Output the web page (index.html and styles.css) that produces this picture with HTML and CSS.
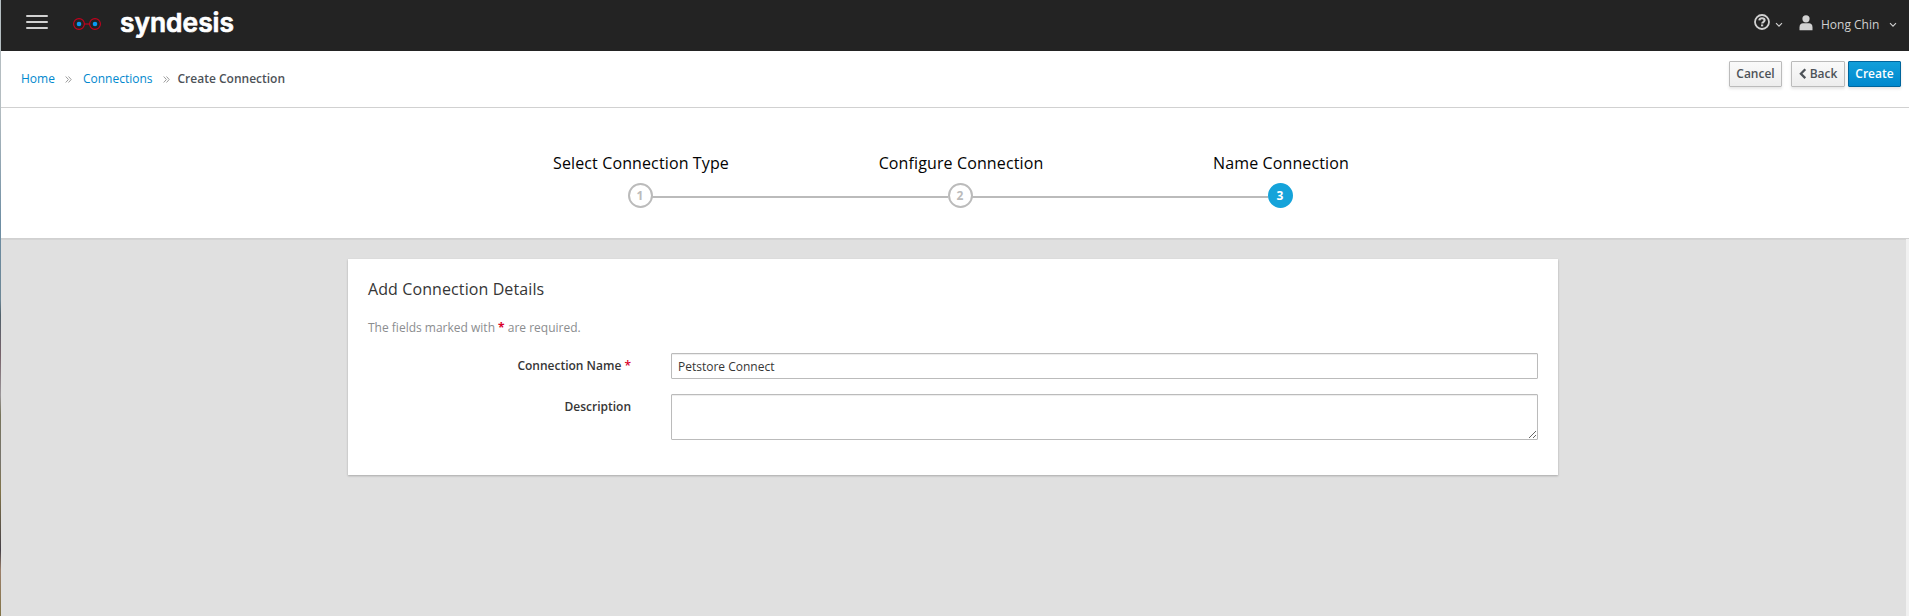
FILE: index.html
```html
<!DOCTYPE html>
<html lang="en">
<head>
<meta charset="utf-8">
<title>Syndesis</title>
<link rel="stylesheet" href="styles.css">
</head>
<body>
<div class="edge"></div>
<div class="app">
  <header class="navbar">
    <button class="menu" aria-label="Menu"><i></i><i></i><i></i></button>
    <svg class="glasses" width="28" height="12" viewBox="0 0 28 12">
      <g fill="none" stroke="#c8001e" stroke-width="1.1"><circle cx="6" cy="6" r="5.4"/><circle cx="22" cy="6" r="5.4"/><path d="M11.5 6h5"/></g>
      <g fill="#0a9af5"><circle cx="6" cy="6" r="2.3"/><circle cx="22" cy="6" r="2.3"/></g>
    </svg>
    <svg class="brand" width="116" height="32" viewBox="0 0 116 32">
      <text x="0" y="23.500" textLength="114" lengthAdjust="spacingAndGlyphs">syndesis</text>
    </svg>
    <div class="tools">
      <svg class="help" width="16" height="16" viewBox="0 0 16 16" fill="none" stroke="#d1d1d1">
        <circle cx="8" cy="8" r="7" stroke-width="1.8"/>
        <path d="M5.300 6.300C5.500 4.900 6.500 4.300 8 4.300c1.600 0 2.600.8 2.600 2 0 1.700-2.500 1.700-2.500 3.300" stroke-width="2.100"/>
        <path d="M7 11.400h2.200" stroke-width="1.900"/>
      </svg>
      <svg class="caret" width="8" height="6" viewBox="0 0 8 6"><path d="M1 1.200l3 3 3-3"/></svg>
      <svg class="user" width="14" height="16" viewBox="0 0 14 16" fill="#d1d1d1"><circle cx="7" cy="3.800" r="3.600"/><path d="M.5 15.300V12.500C.5 9.700 2 8.300 4 8.300h6c2 0 3.500 1.400 3.500 4.200v2.800z"/></svg>
      <span class="name">Hong Chin</span>
      <svg class="caret last" width="8" height="6" viewBox="0 0 8 6"><path d="M1 1.200l3 3 3-3"/></svg>
    </div>
  </header>
  <div class="toolbar">
    <nav class="crumbs">
      <a>Home</a>
      <svg class="sep" width="7" height="7" viewBox="0 0 7 7"><path d="M.7.500l2.700 3-2.700 3M3.500.500l2.700 3-2.700 3"/></svg>
      <a class="second">Connections</a>
      <svg class="sep" width="7" height="7" viewBox="0 0 7 7"><path d="M.7.500l2.700 3-2.700 3M3.500.500l2.700 3-2.700 3"/></svg>
      <strong>Create Connection</strong>
    </nav>
    <div class="actions">
      <button class="btn cancel">Cancel</button>
      <button class="btn back"><svg width="8" height="12" viewBox="0 0 8 12"><path d="M6.300 1.300L1.900 5.700l4.400 4.400"/></svg>Back</button>
      <button class="btn primary">Create</button>
    </div>
  </div>
  <ol class="steps">
    <li><span class="title">Select Connection Type</span><span class="num">1</span></li>
    <li><span class="title">Configure Connection</span><span class="num">2</span></li>
    <li class="active"><span class="title">Name Connection</span><span class="num">3</span></li>
  </ol>
  <main class="content">
    <form class="card">
      <h2>Add Connection Details</h2>
      <p>The fields marked with <b class="req">*</b> are required.</p>
      <div class="row"><label for="name">Connection Name <span class="req">*</span></label><input id="name" type="text" value="Petstore Connect"></div>
      <div class="row"><label for="desc">Description</label><textarea id="desc"></textarea></div>
    </form>
  </main>
</div>
</body>
</html>
```
FILE: styles.css
```css
* { box-sizing: border-box; }
body {
  margin: 0;
  height: 616px;
  overflow: hidden;
  display: flex;
  font: 12px/20px "Open Sans", sans-serif;
  color: #363636;
  background: #fff;
}
.edge {
  width: 1px;
  background: linear-gradient(#b4bdc1 0 107px, #6d8da3 225px, #6d8796 300px, #50616b 315px, #78626a 355px, #9a9699 395px, #77745a 415px, #77746d 460px, #817448 490px, #454047 550px, #9c806b 570px, #827447);
}
.app { flex: 1; display: flex; flex-direction: column; }
.navbar {
  height: 51px;
  background: #232323;
  display: flex;
  align-items: flex-start;
}
.menu {
  margin: 15px 0 0 25px;
  padding: 0;
  width: 22px;
  border: 0;
  background: none;
  display: flex;
  flex-direction: column;
  gap: 4px;
}
.menu i { height: 2px; background: #d1d1d1; border-radius: 1px; }
.glasses { margin: 18px 0 0 25px; }
.brand { margin: 8px 0 0 19px; overflow: visible; }
.brand text {
  font: 600 26px Inter, sans-serif;
  fill: #fff;
  stroke: #fff;
  stroke-width: .7;
  stroke-linejoin: round;
}
.tools { margin-left: auto; display: flex; align-items: flex-start; color: #d1d1d1; }
.help { margin-top: 14px; }
.caret { margin: 22px 0 0 5px; fill: none; stroke: #d1d1d1; stroke-width: 1.1; }
.user { margin: 15px 0 0 16px; }
.name { margin: 15px 0 0 8px; width: 59px; white-space: nowrap; }
.caret.last { margin: 22px 12px 0 9px; }
.toolbar {
  height: 57px;
  border-bottom: 1px solid #d1d1d1;
  display: flex;
  justify-content: space-between;
}
.crumbs { display: flex; align-items: flex-start; padding: 18px 0 0 20px; white-space: nowrap; }
.crumbs a { color: #0088ce; }
.crumbs strong { margin-left: 8px; font-weight: 600; color: #4d5258; }
.sep { margin: 7px 0 0 10px; fill: none; stroke: #9c9c9c; }
.second { margin-left: 11px; }
.actions { display: flex; padding: 10px 8px 0 0; align-items: flex-start; }
.btn {
  width: 54px;
  height: 26px;
  padding: 0;
  border: 1px solid #bbb;
  border-radius: 1px;
  font: 600 12px/20px "Open Sans", sans-serif;
  color: #4d5258;
  background: linear-gradient(#fafafa, #ededed);
  box-shadow: 0 2px 3px rgba(3, 3, 3, .1);
  display: flex;
  justify-content: center;
  align-items: center;
}
.cancel { width: 53px; margin-right: 9px; }
.back { margin-right: 3px; }
.back svg { margin-right: 3px; fill: none; stroke: #4d5258; stroke-width: 2.3; }
.primary { width: 53px; color: #fff; border-color: #00659c; background: linear-gradient(#129fda, #0088ce); }
.steps {
  margin: 0;
  padding: 42px 0 0 479px;
  height: 131px;
  display: flex;
  list-style: none;
  border-bottom: 1px solid #d1d1d1;
}
.steps li {
  position: relative;
  width: 320px;
  display: flex;
  flex-direction: column;
  align-items: center;
}
.title { padding-left: 2px; font-size: 16px; line-height: 26px; letter-spacing: .12px; color: #030303; }
.num {
  position: relative;
  margin-top: 7px;
  width: 25px;
  height: 25px;
  border: 2px solid #bbb;
  border-radius: 50%;
  font-size: 12px;
  font-weight: 700;
  line-height: 21px;
  text-align: center;
  color: #bbb;
  background: #fff;
}
.steps li + li::before {
  content: "";
  position: absolute;
  left: -148px;
  top: 46px;
  width: 296px;
  height: 2px;
  background: #bbb;
}
.active .num { background: #15a3da; border-color: #15a3da; color: #fff; }
.content {
  flex: 1;
  border-right: 3px solid #f1f1f1;
  background: #e0e0e0;
  padding: 20px 0 0 347px;
  box-shadow: inset 0 1px 0 #d4d4d4;
}
.card {
  width: 1210px;
  height: 216px;
  padding: 20px;
  background: #fff;
  box-shadow: 0 1px 2px rgba(3, 3, 3, .25);
}
h2 { margin: 0; font-size: 16px; font-weight: 400; line-height: 21px; letter-spacing: .1px; }
p { margin: 18px 0 15px; color: #8b8d8f; }
.req { color: #d9002b; }
.row { display: flex; margin-bottom: 15px; }
label { width: 263px; margin-right: 40px; padding-top: 3px; text-align: right; font-weight: 600; }
input, textarea {
  width: 867px;
  height: 26px;
  padding: 2px 6px;
  border: 1px solid #bbb;
  border-radius: 1px;
  font: 12px/20px "Open Sans", sans-serif;
  color: #363636;
  background: #fff;
  box-shadow: inset 0 1px 1px rgba(3, 3, 3, .075);
}
textarea { height: 46px; resize: vertical; }
```
